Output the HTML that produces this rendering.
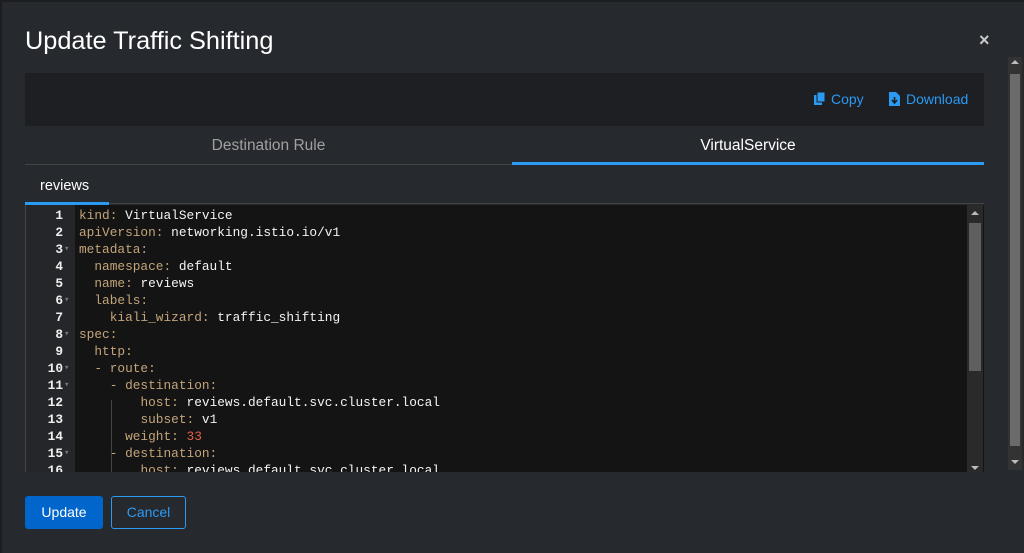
<!DOCTYPE html><html><head><style>
*{margin:0;padding:0;box-sizing:border-box}
body{width:1024px;height:553px;background:#1b1d21;position:relative;overflow:hidden;font-family:"Liberation Sans",sans-serif}
.m{position:absolute;left:2px;top:2px;width:1022px;height:551px;background:#26292d}
.a{position:absolute}
.code{font-family:"Liberation Mono",monospace;font-size:12.8px;line-height:17px;white-space:pre}
.k{color:#c4a47a}.v{color:#f4f4f4}.n{color:#e0604a}
</style></head><body>
<div class="m"></div>
<div class="a" style="left:25px;top:27px;font-size:25.3px;color:#fff">Update Traffic Shifting</div>
<div class="a" style="left:979px;top:30px;font-size:18px;font-weight:bold;color:#c8c8c8">×</div>
<div class="a" style="left:1008px;top:57px;width:14px;height:413px;background:#333"></div>
<div class="a" style="left:1010px;top:74px;width:10px;height:372px;background:#6b6b6b"></div>
<div class="a" style="left:1011px;top:60px;width:0;height:0;border:4px solid transparent;border-bottom:4px solid #bbb;border-top:0"></div>
<div class="a" style="left:1011px;top:460px;width:0;height:0;border:4px solid transparent;border-top:4px solid #bbb;border-bottom:0"></div>
<div class="a" style="left:25px;top:73px;width:959px;height:53px;background:#1d1f23"></div>
<svg class="a" style="left:814px;top:92px" width="12" height="14"><rect x="0" y="3" width="8" height="10" fill="#2b9af3"/><rect x="3" y="0" width="8" height="10" fill="#2b9af3" stroke="#1d1f23" stroke-width="1"/></svg>
<div class="a" style="left:831px;top:91px;font-size:14px;color:#2b9af3">Copy</div>
<svg class="a" style="left:889px;top:92px" width="11" height="14"><path d="M0 0h7l4 4v10H0z" fill="#2b9af3"/><path d="M5.5 5v5M3 8l2.5 3 2.5-3" stroke="#1d1f23" stroke-width="1.6" fill="none"/></svg>
<div class="a" style="left:906px;top:91px;font-size:14px;color:#2b9af3">Download</div>
<div class="a" style="left:25px;top:164px;width:959px;height:1px;background:#444"></div>
<div class="a" style="left:512px;top:162px;width:472px;height:3px;background:#2b9af3"></div>
<div class="a" style="left:25px;top:137px;width:487px;text-align:center;font-size:15.5px;color:#a0a0a0">Destination Rule</div>
<div class="a" style="left:512px;top:137px;width:472px;text-align:center;font-size:15.5px;color:#fff">VirtualService</div>
<div class="a" style="left:40px;top:178px;font-size:14.5px;color:#fff">reviews</div>
<div class="a" style="left:25px;top:203px;width:959px;height:1px;background:#444"></div>
<div class="a" style="left:25px;top:202px;width:84px;height:3px;background:#2b9af3"></div>
<div class="a" style="left:25px;top:205px;width:959px;height:267px;background:#141414;overflow:hidden;border-left:1px solid #444">
<div class="a" style="left:0;top:0;width:49px;height:267px;background:#24262a"></div>
<div class="a code" style="left:0;top:2px;width:37px;text-align:right;color:#f0f0f0;font-weight:bold">1
2
3
4
5
6
7
8
9
10
11
12
13
14
15
16</div>
<div class="a code" style="left:38px;top:2px;color:#777;font-size:9px">

▾


▾

▾

▾
▾



▾</div>
<div class="a" style="left:85px;top:195px;width:1px;height:72px;background:#444"></div>
<div class="a code" style="left:53px;top:2px"><span class="k">kind:</span> <span class="v">VirtualService</span>
<span class="k">apiVersion:</span> <span class="v">networking.istio.io/v1</span>
<span class="k">metadata:</span>
  <span class="k">namespace:</span> <span class="v">default</span>
  <span class="k">name:</span> <span class="v">reviews</span>
  <span class="k">labels:</span>
    <span class="k">kiali_wizard:</span> <span class="v">traffic_shifting</span>
<span class="k">spec:</span>
  <span class="k">http:</span>
  <span class="k">- route:</span>
    <span class="k">- destination:</span>
        <span class="k">host:</span> <span class="v">reviews.default.svc.cluster.local</span>
        <span class="k">subset:</span> <span class="v">v1</span>
      <span class="k">weight:</span> <span class="n">33</span>
    <span class="k">- destination:</span>
        <span class="k">host:</span> <span class="v">reviews.default.svc.cluster.local</span></div>
<div class="a" style="left:941px;top:0;width:16px;height:267px;background:#2a2a2a"></div>
<div class="a" style="left:943px;top:18px;width:12px;height:148px;background:#5f5f5f"></div>
<div class="a" style="left:945px;top:6px;border:4px solid transparent;border-bottom:4px solid #bbb;border-top:0"></div>
<div class="a" style="left:945px;top:261px;border:4px solid transparent;border-top:4px solid #bbb;border-bottom:0"></div>
</div>
<div class="a" style="left:25px;top:496px;width:78px;height:33px;background:#0066cc;border-radius:3px;color:#fff;font-size:14px;text-align:center;line-height:33px">Update</div>
<div class="a" style="left:111px;top:496px;width:75px;height:33px;border:1px solid #2b9af3;border-radius:3px;color:#2b9af3;font-size:14px;text-align:center;line-height:31px">Cancel</div>
</body></html>
